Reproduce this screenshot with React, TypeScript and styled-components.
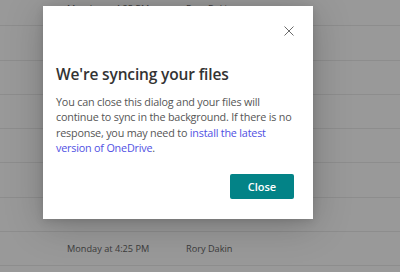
import React from 'react'
import styled, { createGlobalStyle } from 'styled-components'

const GlobalStyle = createGlobalStyle`
  html, body {
    margin: 0;
    padding: 0;
    background: #ffffff;
    font-family: "Open Sans", "Noto Sans", sans-serif;
    overflow: hidden;
  }
`

const Page = styled.div`
  position: relative;
  width: 400px;
  height: 272px;
  overflow: hidden;
  background: #ffffff;
`

const List = styled.div`
  margin-top: -8px;
`

const Row = styled.div`
  box-sizing: border-box;
  height: 34.3px;
  display: flex;
  align-items: center;
  padding-left: 67px;
  border-bottom: 1px solid #ebebeb;
  font-size: 9.2px;
  color: #666666;
`

const DateCell = styled.div`
  width: 119px;
`

const Overlay = styled.div`
  position: absolute;
  inset: 0;
  background: rgba(0, 0, 0, 0.4);
  padding: 6px 0 0 43px;
  box-sizing: border-box;
`

const Dialog = styled.div`
  position: relative;
  box-sizing: border-box;
  width: 270px;
  height: 213px;
  background: #ffffff;
  box-shadow: 0 6px 36px rgba(0, 0, 0, 0.22), 0 2px 8px rgba(0, 0, 0, 0.12);
  padding: 56px 14px 20px 13px;
  display: flex;
  flex-direction: column;
`

const CloseX = styled.button`
  position: absolute;
  top: 18px;
  right: 17px;
  width: 14px;
  height: 14px;
  padding: 0;
  border: 0;
  background: transparent;
  display: flex;
  align-items: center;
  justify-content: center;
`

const Title = styled.h2`
  margin: 0;
  font-size: 15.5px;
  font-weight: 600;
  color: #333333;
  line-height: 24px;
  letter-spacing: -0.15px;
`

const Body = styled.p`
  margin: 8px 0 0;
  font-size: 10.8px;
  line-height: 15.3px;
  color: #555555;
  letter-spacing: -0.2px;
`

const Link = styled.a`
  color: #4f4fe3;
  text-decoration: none;
`

const Footer = styled.div`
  margin-top: auto;
  display: flex;
  justify-content: flex-end;
  padding-right: 5px;
`

const PrimaryButton = styled.button`
  width: 64px;
  height: 25px;
  border: 0;
  border-radius: 2px;
  background: #038387;
  color: #ffffff;
  font-family: "Open Sans", "Noto Sans", sans-serif;
  font-size: 11px;
  font-weight: 600;
  padding: 0;
`

const rows = Array.from({ length: 9 })

export default function App() {
  return (
    <>
      <GlobalStyle />
      <Page>
        <List>
          {rows.map((_, i) => (
            <Row key={i}>
              {(i === 0 || i === 7) && (
                <>
                  <DateCell>Monday at 4:25 PM</DateCell>
                  <div>Rory Dakin</div>
                </>
              )}
            </Row>
          ))}
        </List>
        <Overlay>
          <Dialog>
            <CloseX aria-label="Close">
              <svg width="12" height="12" viewBox="0 0 12 12">
                <path d="M1.5 1.5 L10.5 10.5 M10.5 1.5 L1.5 10.5" stroke="#6b6b6b" strokeWidth="1" fill="none" />
              </svg>
            </CloseX>
            <Title>We're syncing your files</Title>
            <Body>
              You can close this dialog and your files will continue to sync in the background. If there is no
              response, you may need to <Link href="#">install the latest version of OneDrive</Link>.
            </Body>
            <Footer>
              <PrimaryButton>Close</PrimaryButton>
            </Footer>
          </Dialog>
        </Overlay>
      </Page>
    </>
  )
}
